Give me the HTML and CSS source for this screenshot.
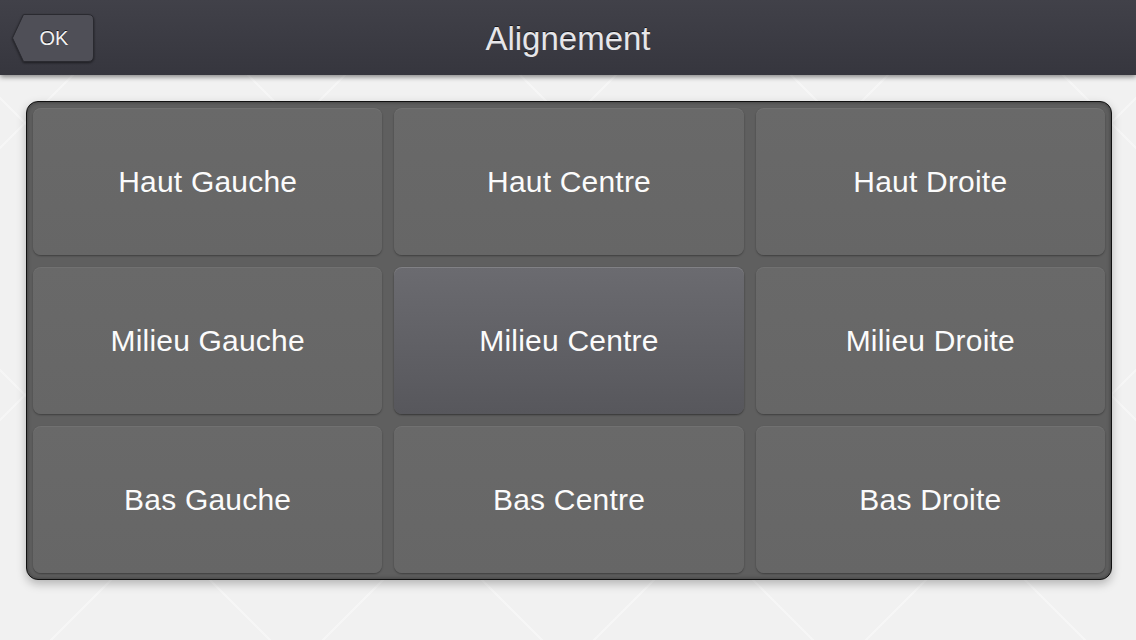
FILE: index.html
```html
<!DOCTYPE html>
<html lang="fr">
<head>
    <meta charset="UTF-8">
    <title>Alignement</title>
    <link rel="stylesheet" href="styles.css">
</head>
<body>

<div class="topbar">
    <button class="back-btn">
        <svg class="back-shape" width="84" height="50" viewBox="0 0 84 50">
            <path d="M12.5 1.5 H77 Q82.5 1.5 82.5 7 V43 Q82.5 48.5 77 48.5 H12.5 L1.5 25 Z" fill="#4f4f57" stroke="#2a2a30" stroke-width="1"/>
        </svg>
        <span>OK</span>
    </button>
    <h1>Alignement</h1>
</div>

<div class="page">
    <div class="panel">
        <button class="tile">Haut Gauche</button>
        <button class="tile">Haut Centre</button>
        <button class="tile">Haut Droite</button>
        <button class="tile">Milieu Gauche</button>
        <button class="tile selected">Milieu Centre</button>
        <button class="tile">Milieu Droite</button>
        <button class="tile">Bas Gauche</button>
        <button class="tile">Bas Centre</button>
        <button class="tile">Bas Droite</button>
    </div>
</div>

</body>
</html>
```

FILE: styles.css
```css
html, body {
    margin: 0;
    height: 100%;
}
body {
    font-family: "Liberation Sans", Arial, sans-serif;
    background-color: #f1f1f1;
    background-image:
        repeating-linear-gradient(45deg, transparent 0 190px, rgba(255,255,255,0.35) 190px 192px),
        repeating-linear-gradient(-45deg, transparent 0 190px, rgba(255,255,255,0.35) 190px 192px);
    overflow: hidden;
}
.topbar {
    position: relative;
    height: 75px;
    background: linear-gradient(#414149, #36363e);
    box-shadow: 0 2px 5px rgba(0,0,0,0.45);
    display: flex;
    align-items: center;
    justify-content: center;
}
.topbar h1 {
    margin: 0;
    font-size: 33px;
    font-weight: normal;
    color: #e6e6e9;
    text-shadow: 0 -1px 0 rgba(0,0,0,0.6);
    padding-top: 2px;
}
.back-btn {
    position: absolute;
    left: 11px;
    top: 13px;
    width: 84px;
    height: 50px;
    padding: 0;
    border: none;
    background: none;
    cursor: pointer;
}
.back-shape {
    position: absolute;
    left: 0;
    top: 0;
    filter: drop-shadow(0 1px 1px rgba(0,0,0,0.5));
}
.back-btn span {
    position: relative;
    display: block;
    padding-left: 2px;
    font-family: "Liberation Sans", Arial, sans-serif;
    font-size: 20px;
    color: #f2f2f2;
    text-shadow: 0 -1px 0 rgba(0,0,0,0.7);
}
.page {
    padding: 26px 24px 0 26px;
}
.panel {
    padding: 6px;
    box-sizing: border-box;
    height: 479px;
    border: 1px solid #111;
    border-radius: 12px;
    background: #5f5f5f;
    box-shadow: 0 4px 10px rgba(0,0,0,0.25), inset 0 0 4px rgba(0,0,0,0.4);
    display: grid;
    grid-template-columns: repeat(3, 1fr);
    grid-template-rows: repeat(3, 1fr);
    gap: 12px;
}
.tile {
    border: none;
    border-radius: 8px;
    background: linear-gradient(#696969, #666666);
    box-shadow: 0 1px 2px rgba(0,0,0,0.35), inset 0 1px 0 rgba(255,255,255,0.06);
    color: #fbfbfb;
    font-family: "Liberation Sans", Arial, sans-serif;
    font-size: 30px;
    letter-spacing: 0.2px;
    cursor: pointer;
    padding: 0;
}
.tile.selected {
    background: linear-gradient(#6b6b70, #57575c);
    box-shadow: 0 1px 2px rgba(0,0,0,0.45), inset 0 1px 0 rgba(255,255,255,0.15);
}
```
